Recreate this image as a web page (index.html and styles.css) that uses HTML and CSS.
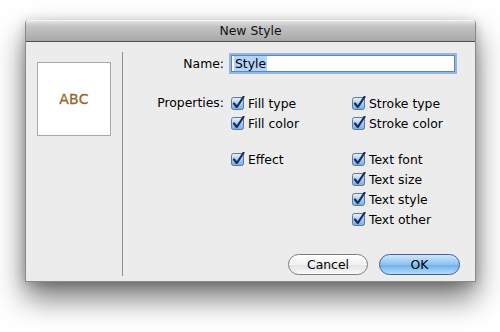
FILE: index.html
```html
<!DOCTYPE html>
<html lang="en">
<head>
    <meta charset="UTF-8">
    <title>New Style</title>
    <link rel="stylesheet" href="styles.css">
</head>
<body>
    <!-- dialog window -->
    <div class="window">
        <div class="titlebar">New Style</div>

        <div class="dialog-body">
            <!-- left: preview -->
            <div class="preview-pane">
                <div class="preview">ABC</div>
            </div>

            <!-- right: form -->
            <div class="form">
                <div class="form-row name-row">
                    <label class="form-label">Name:</label>
                    <div class="text-field"><span class="selected">Style</span></div>
                </div>

                <div class="form-row props-row">
                    <label class="form-label">Properties:</label>
                    <div class="props">
                        <div class="props-col left-col">
                            <div class="group">
                                <div class="check-item"><svg class="check" viewBox="0 0 14 14"><use href="#cb"/></svg>Fill type</div>
                                <div class="check-item"><svg class="check" viewBox="0 0 14 14"><use href="#cb"/></svg>Fill color</div>
                            </div>
                            <div class="group">
                                <div class="check-item"><svg class="check" viewBox="0 0 14 14"><use href="#cb"/></svg>Effect</div>
                            </div>
                        </div>
                        <div class="props-col">
                            <div class="group">
                                <div class="check-item"><svg class="check" viewBox="0 0 14 14"><use href="#cb"/></svg>Stroke type</div>
                                <div class="check-item"><svg class="check" viewBox="0 0 14 14"><use href="#cb"/></svg>Stroke color</div>
                            </div>
                            <div class="group">
                                <div class="check-item"><svg class="check" viewBox="0 0 14 14"><use href="#cb"/></svg>Text font</div>
                                <div class="check-item"><svg class="check" viewBox="0 0 14 14"><use href="#cb"/></svg>Text size</div>
                                <div class="check-item"><svg class="check" viewBox="0 0 14 14"><use href="#cb"/></svg>Text style</div>
                                <div class="check-item"><svg class="check" viewBox="0 0 14 14"><use href="#cb"/></svg>Text other</div>
                            </div>
                        </div>
                    </div>
                </div>

                <div class="buttons">
                    <button class="btn">Cancel</button>
                    <button class="btn btn-default">OK</button>
                </div>
            </div>
        </div>
    </div>

    <!-- checkbox symbol -->
    <svg width="0" height="0" class="defs">
        <defs>
            <linearGradient id="cbfill" x1="0" y1="0" x2="0" y2="1">
                <stop offset="0" stop-color="#eaf3fc"/>
                <stop offset="0.5" stop-color="#a9cdf0"/>
                <stop offset="1" stop-color="#6fb0ea"/>
            </linearGradient>
            <symbol id="cb" viewBox="0 0 14 14">
                <rect x="0.5" y="1.5" width="12" height="12" rx="2" fill="url(#cbfill)" stroke="#62759a"/>
                <path d="M3 7.5 L5.8 11 L12.5 0.8" fill="none" stroke="#1a2f5e" stroke-width="2.2" stroke-linecap="round" stroke-linejoin="round"/>
            </symbol>
        </defs>
    </svg>
</body>
</html>
```

FILE: styles.css
```css
/* reset */
* {
    margin: 0;
    padding: 0;
    box-sizing: border-box;
}

html, body {
    height: 100%;
}

body {
    background-color: white;
    font-family: "DejaVu Sans", "Liberation Sans", sans-serif;
    font-size: 12.4px;
    color: #000;
    overflow: hidden;
}

.defs {
    position: absolute;
}

/* dialog window */
.window {
    width: 451px;
    margin: 20px 0 0 25px;
    background-color: #ececec;
    border: 1px solid #8a8a8a;
    border-top: none;
    border-radius: 4px 4px 0 0;
    box-shadow: 0 16px 30px rgba(0, 0, 0, 0.55), 0 2px 12px rgba(0, 0, 0, 0.2);
}

.titlebar {
    height: 22px;
    line-height: 21px;
    text-align: center;
    font-size: 12.4px;
    color: #111;
    background: linear-gradient(#e9e9e9, #c4c4c4 30%, #a8a8a8);
    border-bottom: 1px solid #505050;
    border-radius: 4px 4px 0 0;
    box-shadow: inset 0 1px 0 #f4f4f4;
}

.dialog-body {
    display: flex;
    height: 239px;
}

/* preview on the left */
.preview-pane {
    width: 97px;
    margin: 10px 0 5px;
    padding: 10px 0 0 11px;
    border-right: 1px solid #8c8c8c;
}

.preview {
    width: 74px;
    height: 74px;
    background-color: white;
    border: 1px solid #a8a8a8;
    display: flex;
    align-items: center;
    justify-content: center;
    color: #9c6226;
    font-size: 14px;
    letter-spacing: 0.2px;
    -webkit-text-stroke: 0.3px #9c6226;
}

/* form on the right */
.form {
    flex: 1;
    display: flex;
    flex-direction: column;
    padding: 11px 15px 6px 0;
}

.form-row {
    display: flex;
}

.form-label {
    width: 101px;
    margin-right: 5px;
    text-align: right;
}

.name-row {
    align-items: center;
    height: 21px;
}

.text-field {
    width: 224px;
    height: 17px;
    margin-left: 2px;
    padding: 0 2px;
    background-color: white;
    border: 1px solid #5c86c0;
    box-shadow: 0 0 0 2px #93b6e2;
    line-height: 15px;
}

.selected {
    background-color: #b4d4fc;
    padding: 0 1px;
}

.props-row {
    margin-top: 19px;
}

.props-row .form-label {
    line-height: 20px;
}

.props {
    display: flex;
}

.props-col {
    display: flex;
    flex-direction: column;
    gap: 16px;
}

.left-col {
    width: 121px;
}

.check-item {
    height: 20px;
    display: flex;
    align-items: center;
    gap: 3px;
    padding-left: 2px;
}

.check {
    width: 14px;
    height: 14px;
}

/* buttons */
.buttons {
    margin-top: auto;
    display: flex;
    justify-content: flex-end;
    gap: 11px;
}

.btn {
    width: 80px;
    height: 21px;
    font-family: inherit;
    font-size: 12.4px;
    color: #000;
    border: 1px solid #7c7c7c;
    border-radius: 11px;
    background: linear-gradient(#ffffff, #f2f2f2 50%, #e2e2e2 51%, #fafafa);
}

.btn-default {
    width: 81px;
    border-color: #3e5f98;
    background: linear-gradient(#cfe6fb, #8fc1ef 50%, #6aaeea 51%, #b5dcfb);
}
```
